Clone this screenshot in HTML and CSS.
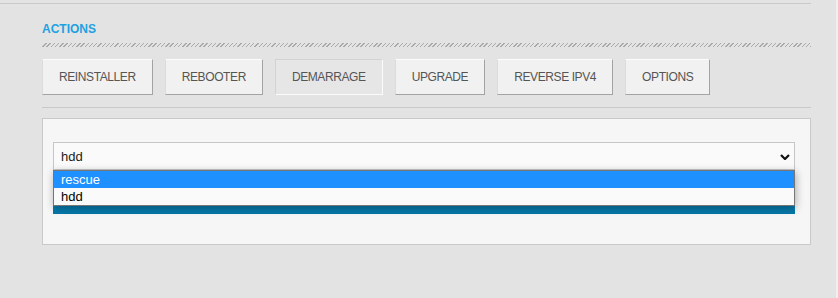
FILE: index.html
```html
<!DOCTYPE html>
<html lang="fr">
<head>
<meta charset="utf-8">
<title>Actions</title>
<link rel="stylesheet" href="styles.css">
</head>
<body>
<div class="page">
  <div class="main">
    <div class="topline"></div>
    <div class="content">
      <h2 class="title">ACTIONS</h2>
      <div class="hatch"></div>
      <div class="buttons">
        <button class="btn">REINSTALLER</button>
        <button class="btn">REBOOTER</button>
        <button class="btn active">DEMARRAGE</button>
        <button class="btn">UPGRADE</button>
        <button class="btn">REVERSE IPV4</button>
        <button class="btn">OPTIONS</button>
      </div>
      <div class="sep"></div>
      <div class="panel">
        <div class="select-wrap">
          <div class="select">
            <span class="select-value">hdd</span>
            <svg class="chev" width="10" height="6" viewBox="0 0 10 6"><polyline points="1,1 5,5 9,1" fill="none" stroke="#111" stroke-width="2.2"/></svg>
          </div>
          <ul class="dropdown">
            <li class="opt selected">rescue</li>
            <li class="opt">hdd</li>
          </ul>
        </div>
        <div class="submit"></div>
      </div>
    </div>
  </div>
  <div class="edge"></div>
</div>
</body>
</html>
```
FILE: styles.css
```css
html, body {
  margin: 0;
  padding: 0;
}
body {
  background: #e3e3e3;
  font-family: "Liberation Sans", Arial, sans-serif;
  height: 298px;
  overflow: hidden;
}
.page {
  display: flex;
  height: 298px;
}
.main {
  width: 836px;
}
.edge {
  width: 2px;
  background: #efefef;
}
.topline {
  margin-top: 3px;
  width: 811px;
  height: 1px;
  background: #c9c9c9;
}
.content {
  padding-left: 42px;
  width: 769px;
}
.title {
  margin: 18px 0 0;
  font-size: 12px;
  line-height: 14px;
  font-weight: bold;
  color: #22a1e2;
}
.hatch {
  margin-top: 7px;
  height: 4px;
  background: repeating-linear-gradient(-45deg, #a9a9a9 0, #a9a9a9 1px, #e3e3e3 1px, #e3e3e3 3px);
}
.buttons {
  display: flex;
  gap: 12px;
  margin-top: 12px;
}
.btn {
  height: 36px;
  padding: 0 16px;
  background: #f1f1f1;
  border: 1px solid;
  border-color: #fcfcfc #a3a3a3 #a3a3a3 #dcdcdc;
  font-family: "Liberation Sans", Arial, sans-serif;
  font-size: 12px;
  letter-spacing: -0.4px;
  color: #555;
  cursor: pointer;
}
.btn.active {
  background: #e6e6e6;
  border-color: #d2d2d2 #fbfbfb #fbfbfb #d2d2d2;
}
.sep {
  margin-top: 12px;
  height: 1px;
  background: #c9c9c9;
}
.panel {
  margin-top: 10px;
  background: #f6f6f6;
  border: 1px solid #c9c9c9;
  padding: 23px 15px 30px 10px;
}
.select-wrap {
  position: relative;
}
.select {
  height: 26px;
  border: 1px solid #c6c6c6;
  background: #fafafa;
  display: flex;
  align-items: center;
  justify-content: space-between;
  padding: 0 4px 0 7px;
}
.select-value {
  font-size: 13px;
  color: #1a1a1a;
}
.chev {
  margin-top: 1px;
}
.dropdown {
  position: absolute;
  top: 28px;
  left: 0;
  right: 0;
  margin: 0;
  padding: 0;
  list-style: none;
  background: #fafafa;
  border: 1px solid #767676;
  box-shadow: 1px 2px 8px rgba(0, 0, 0, 0.3);
  z-index: 2;
}
.opt {
  height: 17px;
  line-height: 17px;
  padding-left: 7px;
  font-size: 13px;
  color: #000;
}
.opt.selected {
  background: #1e90ff;
  color: #fff;
}
.submit {
  margin-top: 10px;
  height: 34px;
  background: linear-gradient(#0a80b2, #0678a9);
}
```
